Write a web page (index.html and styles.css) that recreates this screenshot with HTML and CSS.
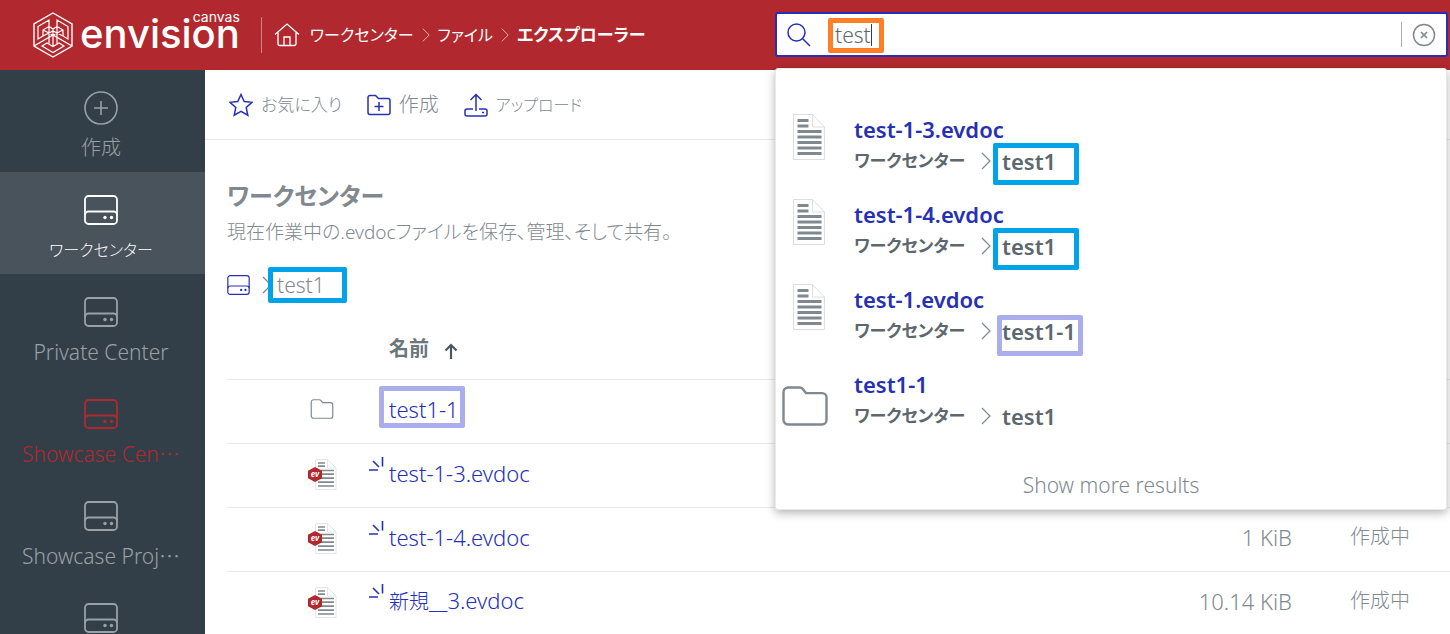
FILE: index.html
```html
<!DOCTYPE html>
<html lang="ja">
<head>
<meta charset="utf-8">
<title>envision canvas</title>
<link rel="stylesheet" href="styles.css">
</head>
<body>
<svg class="defs" width="0" height="0" aria-hidden="true">
  <symbol id="drive" viewBox="0 0 34 30"><g fill="none" stroke="currentColor" stroke-width="1.8"><rect x="1" y="1" width="32" height="28" rx="3.5"/><path d="M1 20a3.500 3.500 0 0 1 3.500-3.500h25a3.500 3.500 0 0 1 3.500 3.500"/></g><circle cx="21" cy="22.500" r="1.700" fill="currentColor"/><circle cx="27.500" cy="22.500" r="1.700" fill="currentColor"/></symbol>
  <symbol id="chev" viewBox="0 0 10 18"><path d="M1 1l8 8-8 8" fill="none" stroke="currentColor" stroke-width="1.200"/></symbol>
  <symbol id="doc" viewBox="0 0 32 46"><path d="M.5 .5h19l12 12.500v32.500H.5z" fill="#fff" stroke="#dcdedf"/><path d="M19.500 .5v12.500h12" fill="none" stroke="#dcdedf"/><path d="M4.500 6.500h11M4.500 12h11M4.500 17.500h24M4.500 23h24M4.500 28.500h24M4.500 34h24M4.500 39.500h24" stroke="#7f898f" stroke-width="3"/></symbol>
  <symbol id="evdoc" viewBox="0 0 29 31"><path d="M7.500 .5h12l8.500 8.500v21.500H7.500z" fill="#fff" stroke="#e3e5e6"/><path d="M19.500 .5v8.500h8.500" fill="none" stroke="#e3e5e6"/><path d="M10 4h7M10 7.200h7M10 11.500h16M10 15.200h16M10 19.200h16M10 23.200h16M10 27h16" stroke="#7f898f" stroke-width="1.700"/><path d="M7 8l7 3.700v7.600L7 23 0 19.300v-7.600z" fill="#b1292e"/></symbol>
  <symbol id="folder" viewBox="0 0 46 40"><path d="M1.500 6a4.500 4.500 0 0 1 4.500-4.500h11.500c1.500 0 2.500.6 3.300 1.600l3.200 4h16a4.500 4.500 0 0 1 4.500 4.500v22.400a4.500 4.500 0 0 1-4.500 4.500H6a4.500 4.500 0 0 1-4.500-4.500z" fill="none" stroke="currentColor" stroke-width="2.400"/></symbol>
  <symbol id="spark" viewBox="0 0 15 15"><path d="M0 13h9M4 4l6 6M13.500 0v9.500" fill="none" stroke="#2630b4" stroke-width="1.600"/></symbol>
</svg>

<header class="topbar">
  <a class="logo" href="#" aria-label="envision canvas">
    <svg class="logo-mark" viewBox="0 0 40 46" fill="none" stroke="#fff"><path stroke-width="1.400" d="M20 1l19 11v22L20 45 1 34V12zM1 34l19-11 19 11"/><path stroke-width="1.200" d="M16 8L5 14.500V27l5-3v-6l6-3.500zM24 8l11 6.500V27l-5-3v-6l-6-3.500zM9 34l11 6.500L31 34l-5-3-6 3.500-6-3.500zM16 14.500l4 2.500 4-2.500M10 18l10 5 10-5M10 24l10-5 10 5M16 14.500V32M24 14.500V32M20 17v17.500"/></svg>
    <span class="logo-text"><span class="logo-sub">canvas</span><span class="logo-name">envision</span></span>
  </a>
  <nav class="crumbs">
    <a class="home" href="#" aria-label="ホーム"><svg width="26" height="24" viewBox="0 0 26 24" fill="none" stroke="#fff" stroke-width="1.300"><path d="M1 11.500L13 1l12 10.500M4 9.500v11a2 2 0 0 0 2 2h14a2 2 0 0 0 2-2v-11M10 22.500V14h6v8.500"/></svg></a>
    <a href="#">ワークセンター</a>
    <svg class="chev"><use href="#chev"/></svg>
    <a href="#">ファイル</a>
    <svg class="chev"><use href="#chev"/></svg>
    <a href="#" class="current">エクスプローラー</a>
  </nav>
  <div class="search">
    <svg class="mag" viewBox="0 0 24 24" fill="none" stroke="#2630b4" stroke-width="1.500"><circle cx="9.500" cy="9.500" r="8.500"/><path d="M15.500 15.500l7.500 7.500"/></svg>
    <div class="field">
      <input type="text" aria-label="検索" value="test">
      <span class="caret"></span>
      <span class="mark mark-orange"></span>
    </div>
    <button class="clear" aria-label="クリア"><svg width="24" height="24" viewBox="0 0 24 24" fill="none" stroke="#7f898f" stroke-width="1.500"><circle cx="12" cy="12" r="10.500"/><path d="M9 9l6 6M15 9l-6 6" stroke-width="1.700"/></svg></button>
    <div class="results">
      <ul>
        <li><svg class="r-doc"><use href="#doc"/></svg><div><a href="#">test-1-3.evdoc</a><p><span class="kana">ワークセンター</span><svg class="chev"><use href="#chev"/></svg><span class="path">test1<span class="mark mark-blue"></span></span></p></div></li>
        <li><svg class="r-doc"><use href="#doc"/></svg><div><a href="#">test-1-4.evdoc</a><p><span class="kana">ワークセンター</span><svg class="chev"><use href="#chev"/></svg><span class="path">test1<span class="mark mark-blue"></span></span></p></div></li>
        <li><svg class="r-doc"><use href="#doc"/></svg><div><a href="#">test-1.evdoc</a><p><span class="kana">ワークセンター</span><svg class="chev"><use href="#chev"/></svg><span class="path">test1-1<span class="mark mark-violet"></span></span></p></div></li>
        <li><svg class="r-folder"><use href="#folder"/></svg><div><a href="#">test1-1</a><p><span class="kana">ワークセンター</span><svg class="chev"><use href="#chev"/></svg><span class="path">test1</span></p></div></li>
      </ul>
      <button class="more">Show more results</button>
    </div>
  </div>
</header>

<div class="shell">
  <nav class="side">
    <a href="#"><svg class="plus" viewBox="0 0 34 34" fill="none" stroke="currentColor" stroke-width="1.600"><circle cx="17" cy="17" r="16"/><path d="M17 10v14M10 17h14"/></svg><span class="kanji">作成</span></a>
    <a href="#" class="active"><svg><use href="#drive"/></svg><span class="kana">ワークセンター</span></a>
    <a href="#"><svg><use href="#drive"/></svg><span>Private Center</span></a>
    <a href="#" class="red"><svg><use href="#drive"/></svg><span>Showcase Cen⋯</span></a>
    <a href="#"><svg><use href="#drive"/></svg><span>Showcase Proj⋯</span></a>
    <a href="#" aria-label="センター"><svg><use href="#drive"/></svg></a>
  </nav>
  <main>
    <div class="tools">
      <button><svg width="24" height="24" viewBox="0 0 24 24"><path d="M12 1.500l3.200 7 7.800.8-5.800 5.200 1.600 7.700-6.800-3.900-6.800 3.900 1.600-7.700L1 9.300l7.800-.8z"/></svg><span class="hira">お気に入り</span></button>
      <button><svg width="24" height="24" viewBox="0 0 24 24"><path d="M1 4.500a2 2 0 0 1 2-2h5.500l3 3H21a2 2 0 0 1 2 2v12a2 2 0 0 1-2 2H3a2 2 0 0 1-2-2zM12 9v9M7.500 13.500h9"/></svg><span>作成</span></button>
      <button><svg width="24" height="24" viewBox="0 0 24 24"><path d="M12 18V1.500M6.500 7L12 1.500 17.500 7M9 16H3a2 2 0 0 0-2 2v3a2 2 0 0 0 2 2h18a2 2 0 0 0 2-2v-3a2 2 0 0 0-2-2h-6M18 19.500h2"/></svg><span class="kana">アップロード</span></button>
    </div>
    <div class="content">
      <h1>ワークセンター</h1>
      <p class="lead">現在作業中の.evdocファイルを保存、管理、そして共有。</p>
      <nav class="trail"><a href="#" aria-label="ワークセンター"><svg class="drive"><use href="#drive"/></svg></a><svg class="chev"><use href="#chev"/></svg><span class="path">test1<span class="mark mark-trail"></span></span></nav>
      <table>
        <thead><tr><th class="c-icon"></th><th class="c-name">名前<svg class="sort" width="14" height="16" viewBox="0 0 14 16"><path d="M7 16V2M1.500 7.500L7 2l5.500 5.500" fill="none" stroke="#4c575e" stroke-width="2.200"/></svg></th><th class="c-size"></th><th class="c-state"></th></tr></thead>
        <tbody>
          <tr><td><svg class="t-folder"><use href="#folder"/></svg></td><td><a class="path" href="#">test1-1<span class="mark mark-row"></span></a></td><td></td><td></td></tr>
          <tr><td><svg class="t-doc" viewBox="0 0 29 31"><use href="#evdoc"/><text x="7" y="18" class="evmark">ev</text></svg></td><td><a class="path" href="#">test-1-3.evdoc<svg class="spark"><use href="#spark"/></svg></a></td><td></td><td></td></tr>
          <tr><td><svg class="t-doc" viewBox="0 0 29 31"><use href="#evdoc"/><text x="7" y="18" class="evmark">ev</text></svg></td><td><a class="path" href="#">test-1-4.evdoc<svg class="spark"><use href="#spark"/></svg></a></td><td>1 KiB</td><td>作成中</td></tr>
          <tr><td><svg class="t-doc" viewBox="0 0 29 31"><use href="#evdoc"/><text x="7" y="18" class="evmark">ev</text></svg></td><td><a class="path" href="#"><span class="kanji">新規</span>__3.evdoc<svg class="spark"><use href="#spark"/></svg></a></td><td>10.14 KiB</td><td>作成中</td></tr>
        </tbody>
      </table>
    </div>
  </main>
</div>
</body>
</html>
```
FILE: styles.css
```css
* { box-sizing: border-box; }
html, body { height: 100%; }
body {
  margin: 0;
  display: flex;
  flex-direction: column;
  overflow: hidden;
  background: #fff;
  color: #7f898f;
  font: 300 20px/28px "Noto Sans", "Noto Sans CJK JP", sans-serif;
  font-feature-settings: "palt";
}
a { color: inherit; text-decoration: none; }
button { border: 0; padding: 0; background: none; color: inherit; font: inherit; font-feature-settings: inherit; }
svg { display: block; flex: none; }
p, h1, ul { margin: 0; padding: 0; }
.defs { position: absolute; }
.kana { font-size: 16px; }
.hira { font-size: 17px; }
.kanji { font-size: 20px; }
.chev { width: 10px; height: 18px; }
.path { position: relative; }
.mark { position: absolute; border: 5px solid #00a2e8; border-radius: 2px; pointer-events: none; }

.topbar { display: flex; align-items: center; height: 70px; flex: none; background: #b1292e; color: #fff; position: relative; z-index: 1; padding: 0 2px 1px 0; }
.logo { display: flex; align-items: center; gap: 7px; padding-left: 33px; width: 262px; height: 36px; border-right: 1px solid #d08386; }
.logo-mark { width: 40px; height: 46px; }
.logo-text { position: relative; font-family: Inter, sans-serif; font-weight: 500; }
.logo-name { font-size: 40px; line-height: 40px; }
.logo-sub { position: absolute; right: 0; top: -5px; font-size: 14px; line-height: 16px; font-weight: 400; }
.crumbs { display: flex; align-items: center; gap: 8px; width: 513px; padding-left: 12px; font-size: 16px; font-weight: 400; }
.crumbs .home { margin-right: 2px; }
.crumbs .chev { width: 8px; height: 16px; color: #e5b5b7; }
.crumbs .current { font-size: 17px; font-weight: 700; }

.search { flex: 1; display: flex; align-items: center; height: 45px; border: 2px solid #2630b4; border-radius: 3px; background: #fff; color: #5c676e; position: relative; }
.mag { width: 24px; height: 24px; margin-left: 10px; }
.field { flex: 1; position: relative; margin-left: 24px; display: flex; }
.field input { flex: 1; min-width: 0; border: 0; outline: 0; padding: 0; height: 36px; font: inherit; font-size: 21px; color: inherit; background: none; }
.caret { position: absolute; left: 36px; top: 7px; width: 1px; height: 22px; background: #333f48; }
.mark-orange { left: -7px; top: 1px; width: 56px; height: 35px; border-color: #ff7f27; }
.clear { border-left: 1px solid #a8aeb2; height: 25px; padding: 0 10px; display: flex; align-items: center; }
.results { position: absolute; left: -2px; right: -1px; top: 54px; background: #fff; border: 1px solid #e6e8e9; border-radius: 3px; box-shadow: 0 3px 10px rgba(0, 0, 0, .3); padding: 42px 0 0; font-size: 22px; font-weight: 600; }
.results ul { list-style: none; }
.results li { display: grid; grid-template-columns: 78px 1fr; height: 85px; }
.results li a { color: #2630b4; display: block; line-height: 36px; }
.results p { display: flex; align-items: center; line-height: 28px; }
.results .kana { width: 127px; font-size: 17px; }
.results .chev { color: #7f898f; margin-right: 11px; }
.r-doc { width: 32px; height: 46px; margin: 3px 0 0 17px; }
.r-folder { width: 46px; height: 40px; margin: 20px 0 0 6px; color: #7f898f; }
.mark-blue { left: -9px; top: -4px; width: 86px; height: 42px; }
.mark-violet { left: -5px; top: -2px; width: 86px; height: 41px; border-color: #abaeec; }
.more { display: block; width: 100%; height: 48px; margin-top: 10px; font-size: 21px; font-weight: 300; color: #7f898f; }

.shell { flex: 1; min-height: 0; display: grid; grid-template-columns: 205px 1fr; }
.side { background: #333f48; color: #9aa0a5; overflow: hidden; font-size: 21px; }
.side a { display: flex; flex-direction: column; align-items: center; height: 102px; padding: 23px 3px 0 0; gap: 11px; }
.side a svg { width: 34px; height: 30px; }
.side a .plus { height: 34px; margin: -2px 0; }
.side .active { background: #49535b; color: #fff; }
.side .red { color: #b1292e; }
main { overflow: hidden; }
.tools { display: flex; align-items: center; gap: 25px; height: 70px; padding-left: 24px; border-bottom: 1px solid #e6e8e9; }
.tools button { display: flex; align-items: center; gap: 8px; }
.tools svg { fill: none; stroke: #2630b4; stroke-width: 1.5px; }
.content { padding: 40px 0 0 22px; }
h1 { font-size: 24px; line-height: 32px; font-weight: 700; }
.lead { font-size: 19px; line-height: 40px; }
.trail { display: flex; align-items: center; margin-top: 19px; font-size: 21px; }
.trail .drive { width: 23px; height: 20px; color: #2630b4; }
.trail .chev { margin: 0 5px 0 12px; }
.mark-trail { left: -9px; top: -4px; width: 79px; height: 36px; }
table { width: 100%; border-collapse: collapse; table-layout: fixed; margin-top: 18px; }
th { height: 62px; padding: 2px 0 0; text-align: left; font-weight: 600; color: #6b767d; }
td { height: 64px; padding: 0 0 4px; border-top: 1px solid #e6e8e9; }
.c-icon { width: 162px; }
.c-size { width: 200px; }
.c-state { width: 158px; }
td:nth-child(2), td:nth-child(3) { font-size: 22px; }
td:nth-child(3) { text-align: right; }
td:nth-child(4) { padding-left: 58px; }
td a { color: #2630b4; }
.sort { display: inline-block; margin-left: 15px; vertical-align: -3px; }
.t-folder { width: 24px; height: 20px; margin-left: 83px; }
.t-doc { width: 29px; height: 31px; margin: 2px 0 0 81px; }
.evmark { font: italic 700 8px "Noto Sans", sans-serif; fill: #fff; text-anchor: middle; }
.spark { position: absolute; left: -20px; top: -1px; width: 15px; height: 15px; }
.mark-row { left: -10px; top: -8px; width: 86px; height: 42px; border-color: #abaeec; }
```
